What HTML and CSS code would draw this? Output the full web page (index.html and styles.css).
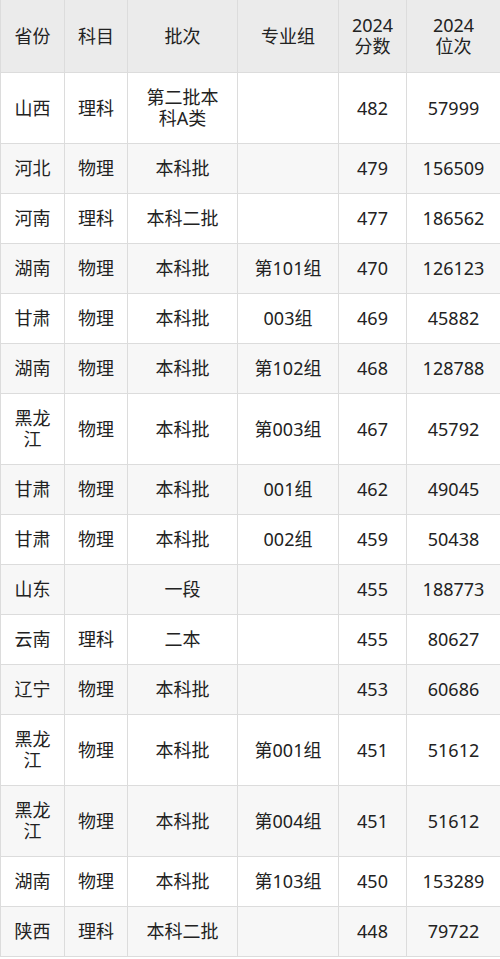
FILE: index.html
```html
<!DOCTYPE html>
<html lang="zh-CN">
<head>
<meta charset="utf-8">
<link rel="stylesheet" href="styles.css">
</head>
<body>
<table class="score-table">
  <colgroup>
    <col class="c1"><col class="c2"><col class="c3"><col class="c4"><col class="c5"><col class="c6">
  </colgroup>
  <thead>
    <tr><th>省份</th><th>科目</th><th>批次</th><th>专业组</th><th>2024<br>分数</th><th>2024<br>位次</th></tr>
  </thead>
  <tbody>
    <tr><td>山西</td><td>理科</td><td>第二批本<br>科A类</td><td></td><td>482</td><td>57999</td></tr>
    <tr><td>河北</td><td>物理</td><td>本科批</td><td></td><td>479</td><td>156509</td></tr>
    <tr><td>河南</td><td>理科</td><td>本科二批</td><td></td><td>477</td><td>186562</td></tr>
    <tr><td>湖南</td><td>物理</td><td>本科批</td><td>第101组</td><td>470</td><td>126123</td></tr>
    <tr><td>甘肃</td><td>物理</td><td>本科批</td><td>003组</td><td>469</td><td>45882</td></tr>
    <tr><td>湖南</td><td>物理</td><td>本科批</td><td>第102组</td><td>468</td><td>128788</td></tr>
    <tr><td>黑龙<br>江</td><td>物理</td><td>本科批</td><td>第003组</td><td>467</td><td>45792</td></tr>
    <tr><td>甘肃</td><td>物理</td><td>本科批</td><td>001组</td><td>462</td><td>49045</td></tr>
    <tr><td>甘肃</td><td>物理</td><td>本科批</td><td>002组</td><td>459</td><td>50438</td></tr>
    <tr><td>山东</td><td></td><td>一段</td><td></td><td>455</td><td>188773</td></tr>
    <tr><td>云南</td><td>理科</td><td>二本</td><td></td><td>455</td><td>80627</td></tr>
    <tr><td>辽宁</td><td>物理</td><td>本科批</td><td></td><td>453</td><td>60686</td></tr>
    <tr><td>黑龙<br>江</td><td>物理</td><td>本科批</td><td>第001组</td><td>451</td><td>51612</td></tr>
    <tr><td>黑龙<br>江</td><td>物理</td><td>本科批</td><td>第004组</td><td>451</td><td>51612</td></tr>
    <tr><td>湖南</td><td>物理</td><td>本科批</td><td>第103组</td><td>450</td><td>153289</td></tr>
    <tr><td>陕西</td><td>理科</td><td>本科二批</td><td></td><td>448</td><td>79722</td></tr>
  </tbody>
</table>
</body>
</html>
```

FILE: styles.css
```css
html, body {
  margin: 0;
  padding: 0;
  background: #ffffff;
}

.score-table {
  width: 500px;
  table-layout: fixed;
  border-collapse: collapse;
  font-family: "Noto Sans", "Noto Sans CJK SC", sans-serif;
  font-size: 18px;
  line-height: 21px;
  color: #222222;
}

.c1 { width: 64px; }
.c2 { width: 63px; }
.c3 { width: 110px; }
.c4 { width: 101px; }
.c5 { width: 68px; }
.c6 { width: 94px; }

.score-table th,
.score-table td {
  border: 1px solid #dcdcdc;
  padding: 14px 0;
  text-align: center;
  vertical-align: middle;
  font-weight: normal;
  white-space: nowrap;
}

.score-table thead th {
  background: #ebebeb;
  height: 44px;
  padding: 14px 0;
  border-top: none;
}

.score-table tbody tr:nth-child(even) td {
  background: #f7f7f7;
}
```
